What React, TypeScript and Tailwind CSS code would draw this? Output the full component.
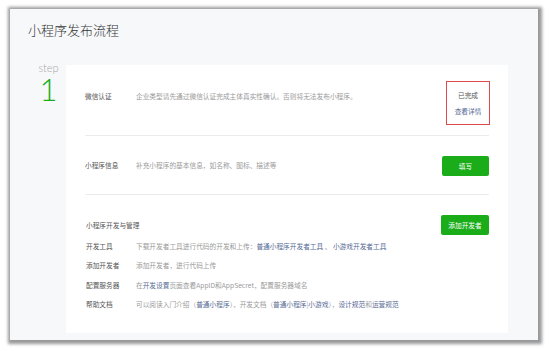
import React from "react";

const FONT = { fontFamily: '"Noto Sans CJK SC", "Noto Sans", sans-serif' };

const Link: React.FC<{ children: React.ReactNode }> = ({ children }) => (
  <span className="text-[#576b95]">{children}</span>
);

const SubRow: React.FC<{ label: string; children: React.ReactNode }> = ({
  label,
  children,
}) => (
  <div className="flex items-center h-[19.5px]">
    <div className="w-[50px] text-[#555555]">{label}</div>
    <div className="text-[#9a9a9a]">{children}</div>
  </div>
);

const App: React.FC = () => {
  return (
    <div className="w-[551px] h-[351px] bg-white pt-[9px] pl-[10px]" style={FONT}>
      <div className="w-[528px] h-[331px] bg-[#f7f8fa] shadow-[1px_1px_3px_3px_rgba(0,0,0,0.4)] flex flex-col">
        {/* Title */}
        <div className="pl-[18px] pt-[11px] h-[56px] text-[13px] font-light text-[#353535] leading-[20px]">
          小程序发布流程
        </div>

        <div className="flex">
          {/* Step marker */}
          <div
            className="w-[56px] flex flex-col items-center pl-[21px] -mt-[4px]"
            style={{ fontFamily: 'Lato, "Open Sans", sans-serif' }}
          >
            <div className="text-[11px] text-[#a8a8a8] leading-[13px] font-light">step</div>
            <div className="text-[31px] text-[#1aad19] leading-[28px] font-light mt-[1px]">1</div>
          </div>

          {/* Card */}
          <div className="w-[442px] h-[268px] bg-white px-[19px] text-[6.7px] leading-[10px]">
            {/* Row 1 */}
            <div className="h-[71px] flex items-center justify-between border-b border-[#ececec]">
              <div className="flex items-center mb-[8px]">
                <div className="w-[51px] text-[#555555]">微信认证</div>
                <div className="text-[#9a9a9a]">
                  企业类型请先通过微信认证完成主体真实性确认。否则将无法发布小程序。
                </div>
              </div>
              <div className="w-[44px] h-[44px] border border-[#e14b4b] flex flex-col items-center justify-center gap-[6px] mt-[6px] -mr-[1px]">
                <div className="text-[#555555]">已完成</div>
                <div className="text-[#576b95]">查看详情</div>
              </div>
            </div>

            {/* Row 2 */}
            <div className="h-[59px] flex items-center justify-between border-b border-[#ececec]">
              <div className="flex items-center">
                <div className="w-[51px] text-[#555555]">小程序信息</div>
                <div className="text-[#9a9a9a]">补充小程序的基本信息，如名称、图标、描述等</div>
              </div>
              <div className="w-[47px] h-[20px] bg-[#1aad19] rounded-[2px] text-white flex items-center justify-center mt-[2px]">
                填写
              </div>
            </div>

            {/* Row 3 */}
            <div className="pt-[20px]">
              <div className="flex items-center justify-between">
                <div className="text-[#555555] pl-[1px]">小程序开发与管理</div>
                <div className="w-[48px] h-[20px] bg-[#1aad19] rounded-[2px] text-white flex items-center justify-center">
                  添加开发者
                </div>
              </div>
              <div className="pl-[1px] mt-[1px]">
                <SubRow label="开发工具">
                  下载开发者工具进行代码的开发和上传：
                  <Link>普通小程序开发者工具</Link> 、 <Link>小游戏开发者工具</Link>
                </SubRow>
                <SubRow label="添加开发者">添加开发者，进行代码上传</SubRow>
                <SubRow label="配置服务器">
                  在<Link>开发设置</Link>页面查看AppID和AppSecret，配置服务器域名
                </SubRow>
                <SubRow label="帮助文档">
                  可以阅读入门介绍（<Link>普通小程序</Link>），开发文档（
                  <Link>普通小程序</Link>|<Link>小游戏</Link>），
                  <Link>设计规范</Link>和<Link>运营规范</Link>
                </SubRow>
              </div>
            </div>
          </div>
        </div>
      </div>
    </div>
  );
};

export default App;
